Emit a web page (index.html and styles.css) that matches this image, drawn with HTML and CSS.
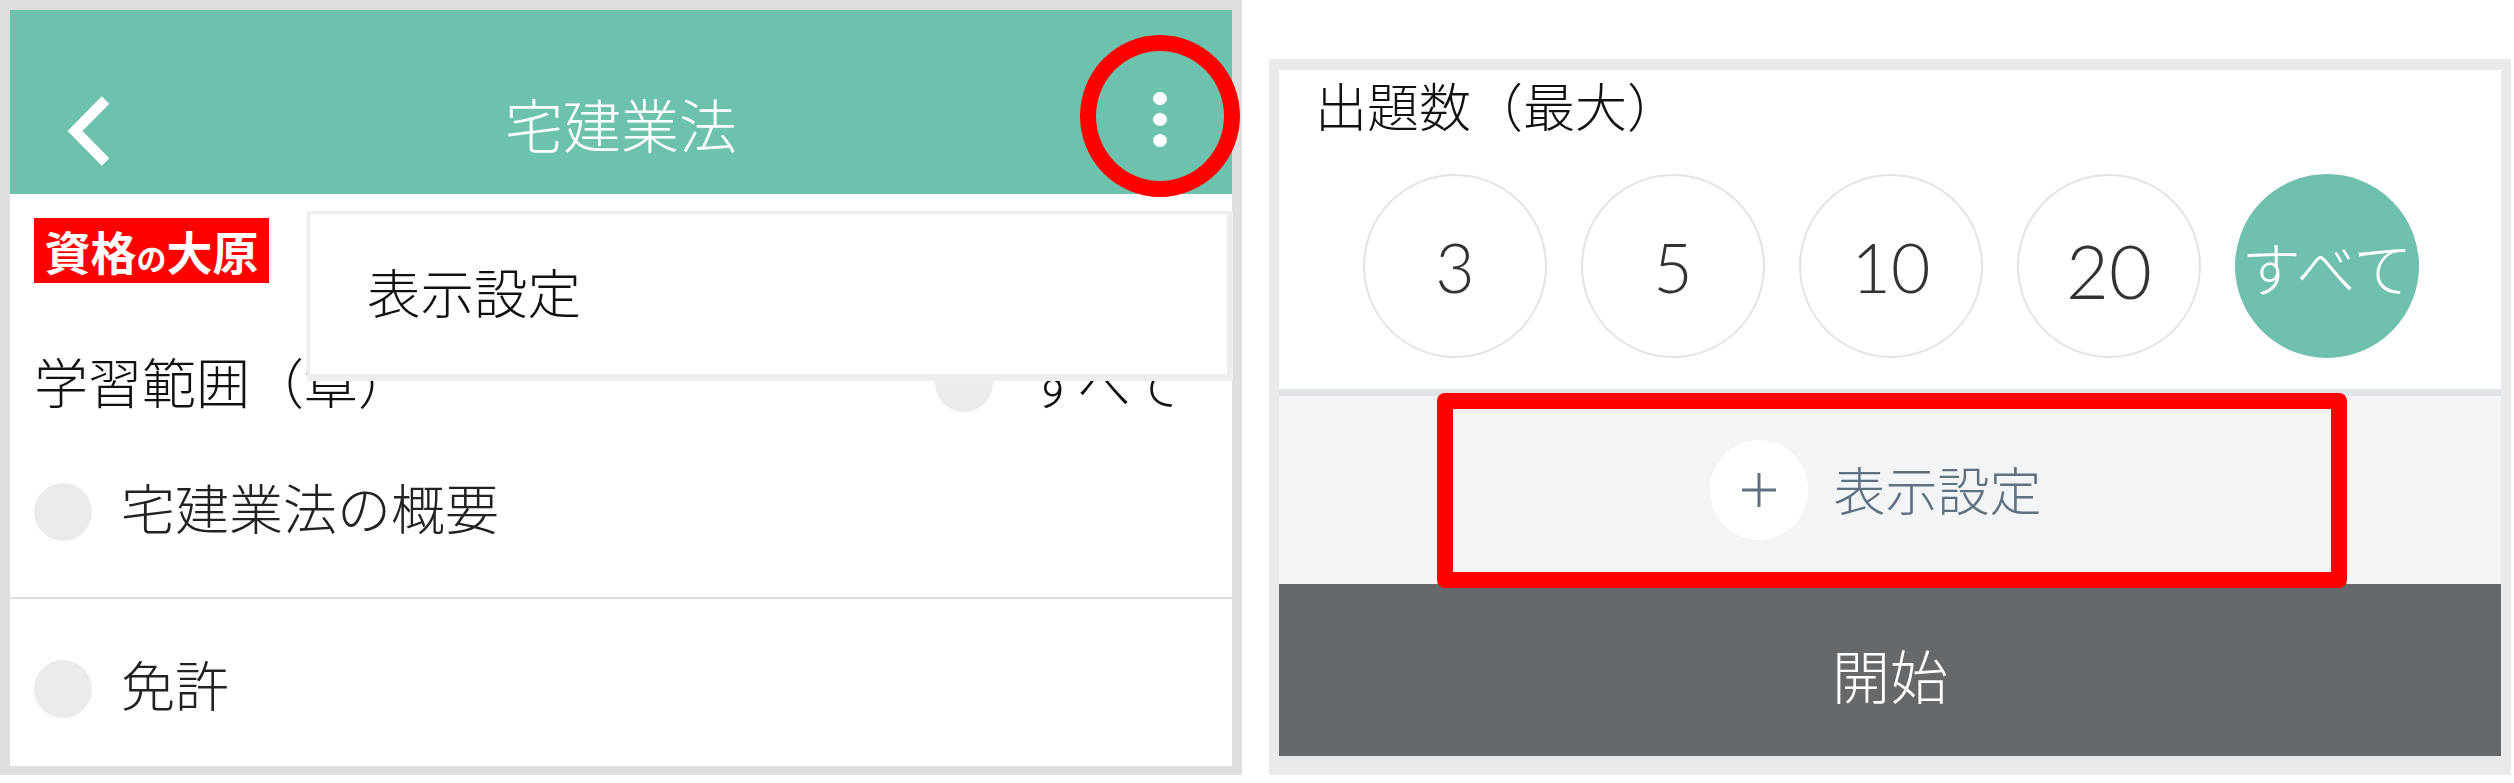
FILE: index.html
```html
<!DOCTYPE html>
<html lang="ja">
<head>
  <meta charset="UTF-8" />
  <title>宅建業法 表示設定</title>
  <link rel="stylesheet" href="styles.css">
</head>
<body>
  <div class="page">
    <!-- 左の画面 -->
    <section class="phone phone-left">
      <header class="topbar">
        <svg class="back-icon" viewBox="0 0 50 80" width="50" height="80">
          <path d="M45.5 10 L15 41 L45.5 72" fill="none" stroke="#fff" stroke-width="10.6" />
        </svg>
        <h1 class="title">宅建業法</h1>
        <div class="more-btn">
          <span class="more-dot"></span>
          <span class="more-dot"></span>
          <span class="more-dot"></span>
        </div>
      </header>

      <div class="content">
        <div class="logo">資格<small>の</small>大原</div>
        <div class="range-row">
          <span class="range-label">学習範囲（章）</span>
          <span class="range-all"><i class="radio"></i>すべて</span>
        </div>
        <ul class="chapters">
          <li class="chapter"><i class="radio"></i><span class="chapter-name">宅建業法の概要</span></li>
          <li class="chapter"><i class="radio"></i><span class="chapter-name">免許</span></li>
        </ul>
      </div>

      <div class="menu">表示設定</div>
      <div class="mark-circle"></div>
    </section>

    <!-- 右の画面 -->
    <section class="phone phone-right">
      <div class="count-card">
        <p class="count-label">出題数（最大）</p>
        <div class="count-list">
          <span class="count">3</span>
          <span class="count">5</span>
          <span class="count">10</span>
          <span class="count count-big">20</span>
          <span class="count count-active">すべて</span>
        </div>
      </div>
      <div class="settings">
        <span class="plus">
          <svg viewBox="0 0 36 36" width="36" height="36">
            <path d="M18 1 V35 M1 18 H35" fill="none" stroke="#5f7080" stroke-width="3" />
          </svg>
        </span>
        <span class="settings-text">表示設定</span>
        <div class="mark-rect"></div>
      </div>
      <button class="start">開始</button>
    </section>
  </div>
</body>
</html>
```

FILE: styles.css
```css
* {
  box-sizing: border-box;
}

body {
  margin: 0;
  background: #fff;
  font-family: "Noto Sans CJK JP", "Liberation Sans", sans-serif;
  font-weight: 300;
  color: #111;
}

.page {
  display: flex;
  gap: 27px;
  height: 783px;
  padding-right: 3px;
}

.phone {
  position: relative;
  height: 775px;
}

/* left */
.phone-left {
  width: 1242px;
  padding: 10px 10px 9px 10px;
  background: #dedede;
  display: flex;
  flex-direction: column;
}

.topbar {
  position: relative;
  height: 184px;
  flex-shrink: 0;
  background: #6dc2ae;
  display: flex;
  align-items: center;
  justify-content: center;
}

.back-icon {
  position: absolute;
  left: 50px;
  top: 80px;
}

.title {
  margin: 42px 0 0;
  font-size: 58px;
  font-weight: 300;
  line-height: 1;
  color: #fff;
}

.more-btn {
  position: absolute;
  left: 1143px;
  top: 82px;
  display: flex;
  flex-direction: column;
  gap: 8px;
}

.more-dot {
  width: 14px;
  height: 13px;
  border-radius: 50%;
  background: #fff;
}

.content {
  flex: 1;
  min-height: 0;
  overflow: hidden;
  background: #fff;
  padding: 24px 0 0 24px;
}

.logo {
  width: 235px;
  height: 65px;
  background: #f00;
  color: #fff;
  font-size: 46px;
  font-weight: 700;
  line-height: 65px;
  text-align: center;
  white-space: nowrap;
}

.logo small {
  font-size: 30px;
}

.range-row {
  display: flex;
  justify-content: space-between;
  align-items: center;
  height: 60px;
  margin-top: 70px;
  padding: 0 49px 0 0;
  font-size: 54px;
  line-height: 60px;
}

.range-label {
  margin-bottom: 4px;
}

.range-all {
  display: flex;
  align-items: center;
  gap: 34px;
}

.radio {
  display: block;
  flex-shrink: 0;
  width: 58px;
  height: 58px;
  border-radius: 50%;
  background: #ebebeb;
}

.chapters {
  list-style: none;
  margin: 14px 0 0 -24px;
  padding: 0;
}

.chapter {
  display: flex;
  align-items: center;
  gap: 29px;
  height: 172px;
  padding: 0 0 0 24px;
  font-size: 54px;
  color: #222;
  border-bottom: 2px solid #ddd;
}

.chapter-name {
  margin-bottom: 12px;
}

.chapter:last-child {
  height: 167px;
  padding-top: 13px;
  border-bottom: none;
}

.menu {
  position: absolute;
  left: 307px;
  top: 211px;
  width: 926px;
  height: 170px;
  padding-left: 57px;
  border: solid #eee;
  border-width: 3px 6px 7px 3px;
  background: #fff;
  font-size: 53.5px;
  line-height: 154px;
}

.mark-circle {
  position: absolute;
  left: 1080px;
  top: 35px;
  width: 160px;
  height: 162px;
  border: 16px solid #f00;
  border-radius: 50%;
}

/* right */
.phone-right {
  flex: 1;
  padding: 11px 10px 19px 10px;
  margin-top: 59px;
  height: 716px;
  background: #eaeaea;
  display: flex;
  flex-direction: column;
}

.count-card {
  height: 326px;
  flex-shrink: 0;
  background: #fff;
  border-bottom: 7px solid #e0e4e8;
  padding: 0 0 0 36px;
}

.count-label {
  margin: 0;
  font-size: 52px;
  line-height: 70px;
}

.count-list {
  display: flex;
  gap: 34px;
  margin-top: 34px;
  margin-left: 48px;
}

.count {
  width: 184px;
  height: 184px;
  border: 2px solid #e2e3e8;
  border-radius: 50%;
  display: flex;
  align-items: center;
  justify-content: center;
  font-family: "Lato", "Noto Sans CJK JP", sans-serif;
  font-size: 68px;
  color: #333;
}

.count-big {
  font-size: 74px;
  padding-top: 8px;
}

.count-active {
  border-color: #6fc0ae;
  background: #6fc0ae;
  color: #fff;
  font-family: "Noto Sans CJK JP", sans-serif;
  font-size: 59px;
  white-space: nowrap;
}

.settings {
  position: relative;
  height: 188px;
  flex-shrink: 0;
  background: #f2f4f6;
  display: flex;
  align-items: center;
  justify-content: center;
  gap: 25px;
  padding-right: 28px;
}

.plus {
  width: 98px;
  height: 100px;
  border-radius: 50%;
  background: #fff;
  display: flex;
  align-items: center;
  justify-content: center;
}

.settings-text {
  font-size: 52px;
  color: #5f7080;
  line-height: 1;
  margin-bottom: 2px;
}

.mark-rect {
  position: absolute;
  left: 158px;
  top: -3px;
  width: 910px;
  height: 195px;
  border: 16px solid #f00;
  border-radius: 8px;
}

.start {
  flex: 1;
  border: none;
  padding: 8px 0 0;
  background: #65696c;
  color: #fff;
  font-family: inherit;
  font-weight: 300;
  font-size: 58px;
}
```
